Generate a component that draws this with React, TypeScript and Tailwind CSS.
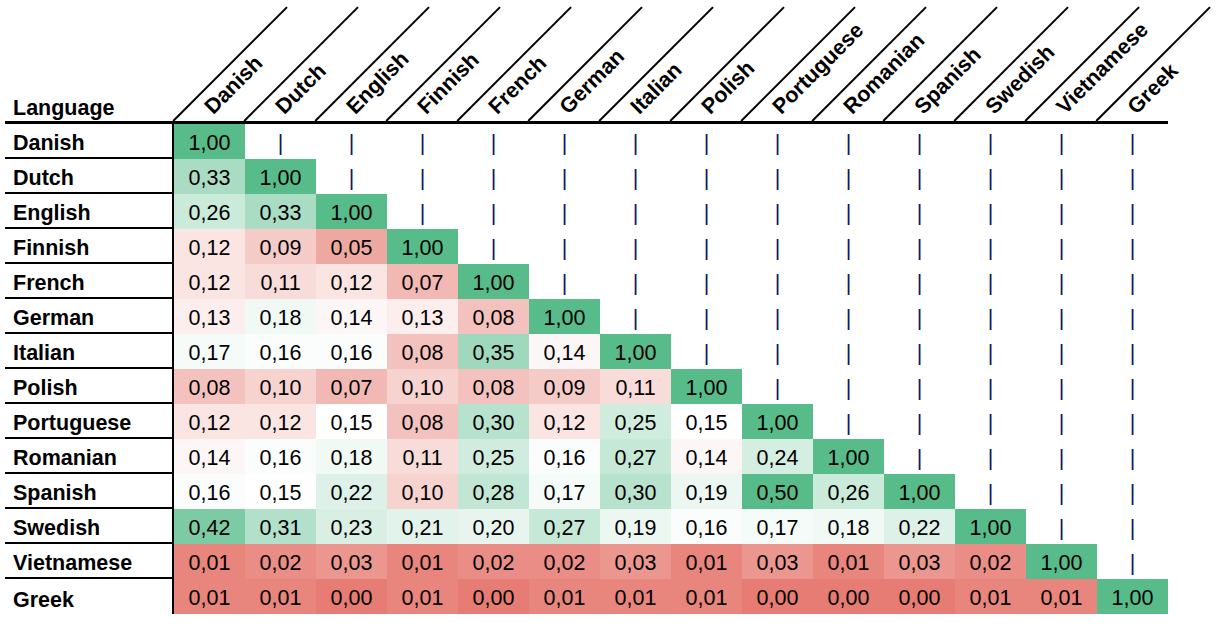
import React from 'react';

const languages = [
  'Danish',
  'Dutch',
  'English',
  'Finnish',
  'French',
  'German',
  'Italian',
  'Polish',
  'Portuguese',
  'Romanian',
  'Spanish',
  'Swedish',
  'Vietnamese',
  'Greek',
];

// lower triangle, row by row (diagonal included)
const matrix: number[][] = [
  [1.0],
  [0.33, 1.0],
  [0.26, 0.33, 1.0],
  [0.12, 0.09, 0.05, 1.0],
  [0.12, 0.11, 0.12, 0.07, 1.0],
  [0.13, 0.18, 0.14, 0.13, 0.08, 1.0],
  [0.17, 0.16, 0.16, 0.08, 0.35, 0.14, 1.0],
  [0.08, 0.1, 0.07, 0.1, 0.08, 0.09, 0.11, 1.0],
  [0.12, 0.12, 0.15, 0.08, 0.3, 0.12, 0.25, 0.15, 1.0],
  [0.14, 0.16, 0.18, 0.11, 0.25, 0.16, 0.27, 0.14, 0.24, 1.0],
  [0.16, 0.15, 0.22, 0.1, 0.28, 0.17, 0.3, 0.19, 0.5, 0.26, 1.0],
  [0.42, 0.31, 0.23, 0.21, 0.2, 0.27, 0.19, 0.16, 0.17, 0.18, 0.22, 1.0],
  [0.01, 0.02, 0.03, 0.01, 0.02, 0.02, 0.03, 0.01, 0.03, 0.01, 0.03, 0.02, 1.0],
  [0.01, 0.01, 0.0, 0.01, 0.0, 0.01, 0.01, 0.01, 0.0, 0.0, 0.0, 0.01, 0.01, 1.0],
];

const RED = [230, 124, 115];
const GREEN = [87, 187, 138];
const MIN = 0;
const MID = 0.15;
const MAX = 0.5;

// sheet-style 3 point colour scale
const scaleColor = (v: number) => {
  let from = RED;
  let t = 0;
  if (v <= MID) {
    from = RED;
    t = (MID - v) / (MID - MIN);
  } else {
    from = GREEN;
    t = Math.min(1, (v - MID) / (MAX - MID));
  }
  const c = from.map((ch) => Math.round(255 - t * (255 - ch)));
  return `rgb(${c[0]}, ${c[1]}, ${c[2]})`;
};

const fmt = (v: number) => v.toFixed(2).replace('.', ',');

export default function App() {
  return (
    <div className="w-[1221px] h-[634px] overflow-hidden bg-white pl-[5px] text-black font-['Liberation_Sans',Arial,sans-serif]">
      {/* Header */}
      <div className="flex w-[1163px] h-[124px] border-b-[3px] border-black">
        <div className="w-[169px] flex items-end pl-[8px] pb-[2px] text-[21.5px] leading-none font-bold">
          Language
        </div>
        {languages.map((lang) => (
          <div key={lang} className="relative w-[71px] h-full">
            <div className="absolute left-[-1px] top-[120px] w-[161px] h-[1.5px] bg-black origin-left -rotate-45" />
            <span className="absolute left-[42px] top-[97px] h-[21px] whitespace-nowrap text-[21.5px] leading-none font-bold origin-bottom-left -rotate-45">
              {lang}
            </span>
          </div>
        ))}
      </div>

      {/* Rows */}
      {languages.map((lang, r) => (
        <div key={lang} className="flex h-[35px]">
          <div
            className={`w-[169px] h-full flex items-end pl-[8px] pb-[3px] border-r-2 border-black text-[21.5px] leading-none font-bold ${
              r < languages.length - 1 ? 'border-b-2' : ''
            }`}
          >
            {lang}
          </div>
          {languages.map((col, c) =>
            c <= r ? (
              <div
                key={col}
                className="w-[71px] h-full flex items-end justify-center pb-[5px] text-[21.5px] leading-none"
                style={{ backgroundColor: scaleColor(matrix[r][c]) }}
              >
                {fmt(matrix[r][c])}
              </div>
            ) : (
              <div
                key={col}
                className="w-[71px] h-full flex items-end justify-center pb-[5px] text-[21.5px] leading-none text-[#14145c]"
              >
                |
              </div>
            )
          )}
        </div>
      ))}
    </div>
  );
}
